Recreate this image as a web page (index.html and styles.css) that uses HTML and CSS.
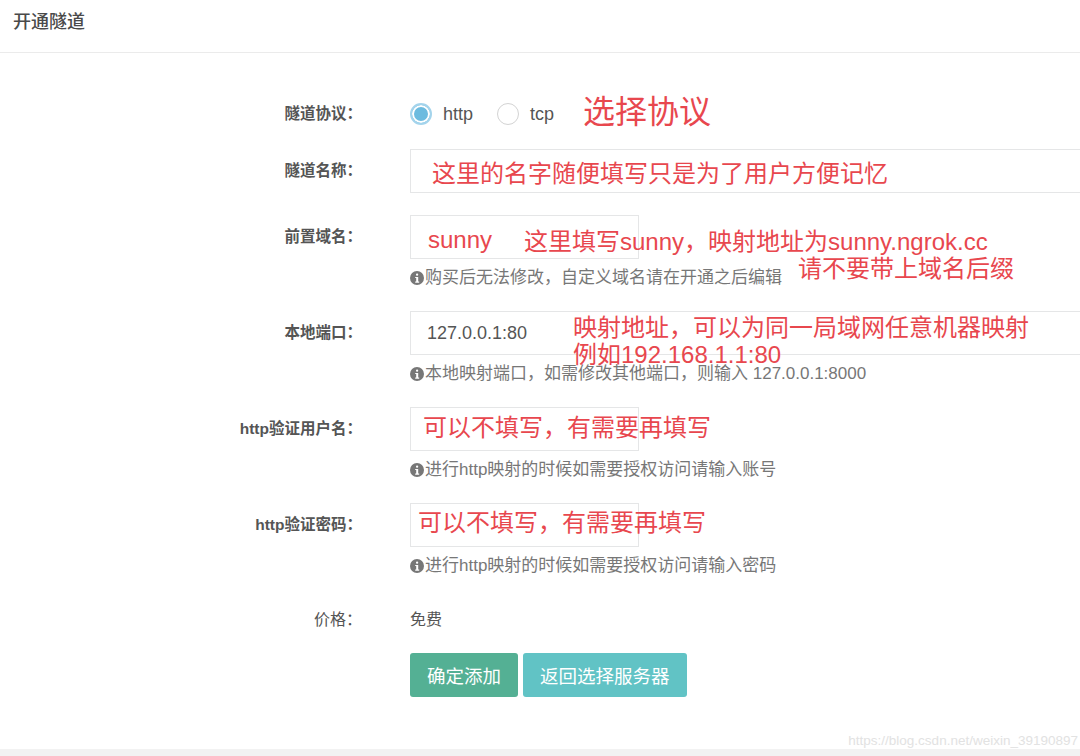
FILE: index.html
```html
<!DOCTYPE html>
<html lang="zh-CN">
<head>
    <meta charset="UTF-8">
    <meta name="viewport" content="width=device-width, initial-scale=1.0">
    <title>开通隧道</title>
    <link rel="stylesheet" href="styles.css">
</head>
<body>
    <div class="page">
        <div class="panel-head">开通隧道</div>

        <div class="form">
            <div class="row row-radio">
                <label class="label">隧道协议：</label>
                <div class="control radios">
                    <span class="radio on"></span><span class="radio-text">http</span>
                    <span class="radio"></span><span class="radio-text">tcp</span>
                    <span class="mark mark-big">选择协议</span>
                </div>
            </div>

            <div class="row">
                <label class="label">隧道名称：</label>
                <div class="control">
                    <div class="input wide"><span class="mark name-mark">这里的名字随便填写只是为了用户方便记忆</span></div>
                </div>
            </div>

            <div class="row">
                <label class="label">前置域名：</label>
                <div class="control">
                    <div class="input short">
                        <span class="mark sunny">sunny</span>
                        <div class="note note-domain">
                            <div>这里填写sunny，映射地址为sunny.ngrok.cc</div>
                            <div class="indent">请不要带上域名后缀</div>
                        </div>
                    </div>
                    <div class="help"><svg class="info" viewBox="0 0 14 14"><circle cx="7" cy="7" r="7" fill="#777"/><rect x="6" y="2.6" width="2.2" height="2.2" rx="1" fill="#fff"/><path d="M5.2 5.9h3v4.6h1v1.2H5.2v-1.2h1V7.1h-1z" fill="#fff"/></svg>购买后无法修改，自定义域名请在开通之后编辑</div>
                </div>
            </div>

            <div class="row">
                <label class="label">本地端口：</label>
                <div class="control">
                    <div class="input wide">
                        <span class="value">127.0.0.1:80</span>
                        <div class="note note-port">映射地址，可以为同一局域网任意机器映射<br>例如192.168.1.1:80</div>
                    </div>
                    <div class="help"><svg class="info" viewBox="0 0 14 14"><circle cx="7" cy="7" r="7" fill="#777"/><rect x="6" y="2.6" width="2.2" height="2.2" rx="1" fill="#fff"/><path d="M5.2 5.9h3v4.6h1v1.2H5.2v-1.2h1V7.1h-1z" fill="#fff"/></svg>本地映射端口，如需修改其他端口，则输入 127.0.0.1:8000</div>
                </div>
            </div>

            <div class="row">
                <label class="label">http验证用户名：</label>
                <div class="control">
                    <div class="input short">
                        <div class="note note-user">可以不填写，有需要再填写</div>
                    </div>
                    <div class="help"><svg class="info" viewBox="0 0 14 14"><circle cx="7" cy="7" r="7" fill="#777"/><rect x="6" y="2.6" width="2.2" height="2.2" rx="1" fill="#fff"/><path d="M5.2 5.9h3v4.6h1v1.2H5.2v-1.2h1V7.1h-1z" fill="#fff"/></svg>进行http映射的时候如需要授权访问请输入账号</div>
                </div>
            </div>

            <div class="row row-last">
                <label class="label">http验证密码：</label>
                <div class="control">
                    <div class="input short">
                        <div class="note note-pass">可以不填写，有需要再填写</div>
                    </div>
                    <div class="help"><svg class="info" viewBox="0 0 14 14"><circle cx="7" cy="7" r="7" fill="#777"/><rect x="6" y="2.6" width="2.2" height="2.2" rx="1" fill="#fff"/><path d="M5.2 5.9h3v4.6h1v1.2H5.2v-1.2h1V7.1h-1z" fill="#fff"/></svg>进行http映射的时候如需要授权访问请输入密码</div>
                </div>
            </div>

            <div class="row row-price">
                <label class="label">价格：</label>
                <div class="control price">免费</div>
            </div>

            <div class="row row-btns">
                <span></span>
                <div class="control btns">
                    <button class="btn btn-ok">确定添加</button>
                    <button class="btn btn-back">返回选择服务器</button>
                </div>
            </div>
        </div>

        <div class="watermark">https://blog.csdn.net/weixin_39190897</div>
    </div>
    <div class="page-foot"></div>
</body>
</html>
```

FILE: styles.css
```css
html, body { margin: 0; padding: 0; }
body { font-family: "Liberation Sans", "Noto Sans CJK SC", sans-serif; color: #555; background: #fff; height: 100vh; display: flex; flex-direction: column; overflow: hidden; }
.page { flex: 1; position: relative; overflow: hidden; }
.page-foot { height: 7px; background: #f2f2f2; }

.panel-head { height: 52px; line-height: 44px; padding-left: 13px; font-size: 18px; font-weight: 500; color: #4a4a4a; border-bottom: 1px solid #ebebeb; }

.form { padding-top: 39px; }
.row { display: grid; grid-template-columns: 362px 1fr; column-gap: 48px; margin-bottom: 22px; }
.row-radio { margin-bottom: 13px; }
.row-last { margin-bottom: 32px; }
.row-price { margin-bottom: 22px; }
.label { text-align: right; font-size: 15.5px; font-weight: bold; line-height: 44px; color: #555; white-space: nowrap; }
.row-price .label { line-height: 22px; font-weight: normal; font-size: 16px; color: #555; }
.control { display: flex; flex-direction: column; align-items: flex-start; min-width: 0; }

.radios { flex-direction: row; align-items: center; height: 44px; }
.radio { width: 20px; height: 20px; border: 1px solid #d3d3d3; border-radius: 50%; box-sizing: content-box; }
.radio.on { width: 18px; height: 18px; border: 2px solid #a4d4ec; background: #6cbbdf; box-shadow: inset 0 0 0 2px #fff; }
.radio-text { font-size: 18px; color: #555; margin: 0 24px 0 11px; }
.mark { color: #e8474e; font-size: 24px; white-space: nowrap; }
.mark-big { font-size: 32px; margin-left: 5px; margin-bottom: 10px; }

.input { position: relative; height: 42px; border: 1px solid #e5e6e7; display: flex; align-items: center; white-space: nowrap; }
.input.wide { align-self: stretch; margin-right: -20px; }
.input.short { width: 227px; }
.name-mark { padding-left: 21px; }
.sunny { padding-left: 17px; padding-top: 6px; }
.value { padding-left: 16px; font-size: 18px; color: #555; }

.note { position: absolute; color: #e8474e; font-size: 24px; line-height: 27px; white-space: nowrap; }
.note-domain { left: 113px; top: 12px; }
.note-domain .indent { padding-left: 274px; }
.note-port { left: 162px; top: 2px; }
.note-user { left: 12px; top: 3px; line-height: 34px; }
.note-pass { left: 7px; top: 2px; line-height: 34px; }

.help { margin: 9px 0 1px; line-height: 20px; font-size: 17px; color: #777; display: flex; align-items: center; white-space: nowrap; }
.info { width: 14px; height: 14px; margin-right: 1px; flex: none; }

.price { line-height: 22px; font-size: 16px; color: #555; }

.btns { flex-direction: row; gap: 5px; }
.btn { height: 44px; padding: 0 17px; border: none; border-radius: 3px; color: #fff; font-family: inherit; font-size: 18.5px; cursor: pointer; }
.btn-ok { background: #54b094; }
.btn-back { background: #61c3c5; }

.watermark { position: absolute; right: 2px; bottom: 0; line-height: 16px; font-size: 13.5px; color: #e2e2e2; }
```
